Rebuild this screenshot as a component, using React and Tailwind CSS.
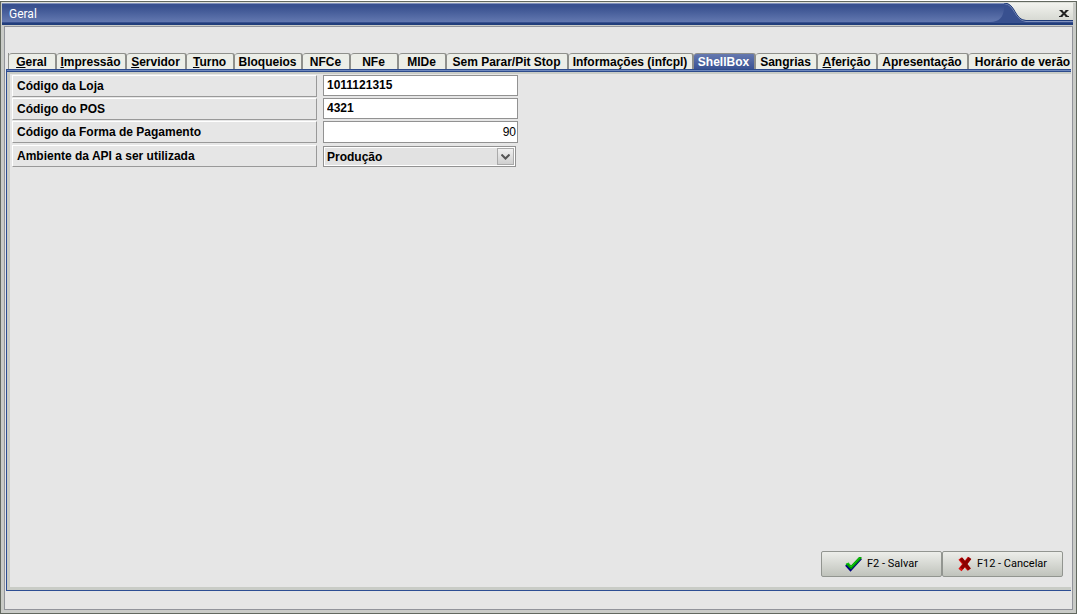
import { useState } from "react";

const TABS = [
  { label: "Geral", hot: true, width: "w-12" },
  { label: "Impressão", hot: true, width: "w-[70px]" },
  { label: "Servidor", hot: true, width: "w-[60px]" },
  { label: "Turno", hot: true, width: "w-12" },
  { label: "Bloqueios", width: "w-[68px]" },
  { label: "NFCe", width: "w-12" },
  { label: "NFe", width: "w-12" },
  { label: "MIDe", width: "w-12" },
  { label: "Sem Parar/Pit Stop", width: "w-[122px]" },
  { label: "Informações (infcpl)", width: "w-[125px]" },
  { label: "ShellBox", width: "w-[62px]" },
  { label: "Sangrias", width: "w-[62px]" },
  { label: "Aferição", hot: true, width: "w-[60px]" },
  { label: "Apresentação", width: "w-[91px]" },
  { label: "Horário de verão", width: "w-[110px]" },
];

function TitleBar() {
  return (
    <header className="mr-[2px] flex h-[22px] shrink-0">
      <div className="flex min-w-0 flex-1 flex-col">
        <div className="h-px shrink-0 bg-[#8191bd]" />
        <div className="h-[3px] shrink-0 bg-[#38508f]" />
        <div className="flex min-h-0 flex-1 items-center bg-linear-to-b from-[#3a5290] to-[#6378b0] pb-px pl-[7px]">
          <h1 className="font-['Roboto',sans-serif] text-xs leading-4 text-white">Geral</h1>
        </div>
        <div className="h-[3px] shrink-0 border-b-2 border-[#213d7b] bg-[#38508f]" />
      </div>
      <div className="relative w-[91px] shrink-0">
        <svg className="block" width="91" height="22" viewBox="0 0 91 22" aria-hidden="true">
          <defs>
            <linearGradient id="cap" x1="0" y1="0" x2="0" y2="1">
              <stop offset="0" stopColor="#f2f3ee" />
              <stop offset="1" stopColor="#cfd2cb" />
            </linearGradient>
            <linearGradient id="pill" x1="0" y1="0" x2="0" y2="1">
              <stop offset="0" stopColor="#3a5290" />
              <stop offset="1" stopColor="#6378b0" />
            </linearGradient>
          </defs>
          <rect width="91" height="22" fill="url(#cap)" />
          <path d="M0 0H22C34 0 32 17 44 17.500H91V22H0Z" fill="#38508f" />
          <path d="M0 .5H22C33 1 32 17 44 18.500H91" fill="none" stroke="#8191bd" />
          <path d="M22 0C34 0 32 17 44 17.500H91" fill="none" stroke="#213d7b" />
          <path d="M0 4H22C22 14 17 19 8 19H0Z" fill="url(#pill)" />
          <path d="M0 21H91" stroke="#213d7b" strokeWidth="2" />
        </svg>
        <button type="button" aria-label="Fechar" className="absolute top-[2px] right-px flex h-4 w-4 items-center justify-center">
          <svg width="10" height="7" viewBox="0 0 10 7" aria-hidden="true">
            <path d="M.5 .5H3.500M6.500 .5H9.500M0 6.500H3.500M6.500 6.500H10" stroke="#222" />
            <path d="M2 .5L8 6.500M8 .5L2 6.500" stroke="#222" strokeWidth="2" />
          </svg>
        </button>
      </div>
    </header>
  );
}

function Tab({ tab, active, onSelect }) {
  return (
    <button
      type="button"
      role="tab"
      aria-selected={active}
      onClick={onSelect}
      className={`h-4 shrink-0 rounded-t-[3px] border-t border-r-2 border-[#8f908c] pr-px text-center text-xs leading-4 font-bold whitespace-nowrap ${tab.width} ${
        active ? "bg-linear-to-b from-[#6679b0] to-[#3a5294] text-white" : "bg-[#eceee8] text-black"
      }`}
    >
      {tab.hot ? <span className="underline underline-offset-1">{tab.label[0]}</span> : tab.label[0]}
      {tab.label.slice(1)}
    </button>
  );
}

const LABEL =
  "flex h-[22px] items-center border border-t-white border-l-white border-r-[#999] border-b-[#999] pl-1 text-xs font-bold";
const FIELD = "w-[195px] border border-[#929292] bg-white px-[3px] pb-px text-xs outline-none";

function Row({ id, label, children }) {
  return (
    <div className="flex gap-[6px]">
      <label htmlFor={id} className={`${LABEL} w-[305px] shrink-0`}>
        {label}
      </label>
      {children}
    </div>
  );
}

function ActionButton({ icon, children }) {
  return (
    <button
      type="button"
      className="flex h-[26px] w-[121px] items-center justify-center gap-[5px] rounded-[2px] border border-[#929590] bg-linear-to-b from-[#edeeea] to-[#c0c3bc] font-['Roboto',sans-serif] text-[11px] whitespace-nowrap"
    >
      {icon}
      {children}
    </button>
  );
}

const CheckIcon = (
  <svg width="17" height="16" viewBox="0 0 17 16" aria-hidden="true">
    <path d="M1 9L5.500 14L16 2.500" fill="none" stroke="#000080" strokeWidth="2.500" />
    <path d="M.5 8L3.500 6.500L6 9.500L14 1H16.500V2.500L6 13.500Z" fill="#009a00" />
    <path d="M1.500 8L3.500 7.500L6 11L15 1.500" fill="none" stroke="#10d510" />
  </svg>
);

const CrossIcon = (
  <svg width="14" height="16" viewBox="0 0 14 16" aria-hidden="true">
    <path d="M2 2.500L11 13.500M11.500 2L2 14" fill="none" stroke="#e01010" strokeWidth="4" />
    <path d="M3 2.500L11.500 13.500M12 2L3.500 12.500" fill="none" stroke="#8c0000" strokeWidth="3.500" />
  </svg>
);

export default function App() {
  const [active, setActive] = useState("ShellBox");
  return (
    <div className="flex h-screen min-h-80 bg-white pt-px pr-[3px] font-['Liberation_Sans',Arial,sans-serif] text-black">
      <main className="flex min-w-0 flex-1 flex-col border border-[#62685f] bg-[#c9cbc7] px-px">
        <div className="h-px shrink-0 bg-[#dcded8]" />
        <TitleBar />
        <div className="mx-[2px] mt-px mb-[3px] flex min-h-0 flex-1 flex-col border border-[#92949b] bg-[#e6e6e6] pt-[26px] pr-px pl-px">
          <div role="tablist" aria-label="Configurações" className="flex shrink-0 overflow-hidden pl-[2px]">
            <div className="flex border-l border-[#8f908c]">
              {TABS.map((tab) => (
                <Tab key={tab.label} tab={tab} active={active === tab.label} onSelect={() => setActive(tab.label)} />
              ))}
            </div>
          </div>
          <form
            role="tabpanel"
            aria-label={active}
            onSubmit={(e) => e.preventDefault()}
            className="mb-[18px] flex min-h-0 flex-1 flex-col border-b border-l border-[#2d4e93]"
          >
            <div className="h-[3px] shrink-0 border-y border-[#2d4b8c] bg-[#6c86bd]" />
            <div className="flex min-h-0 flex-1 flex-col border-t-2 border-b-3 border-l-3 border-[#c9ccc6] pt-px pl-[2px]">
              <div className="flex flex-col gap-px">
                <Row id="loja" label="Código da Loja">
                  <input id="loja" defaultValue="1011121315" className={`${FIELD} h-[21px] font-bold`} />
                </Row>
                <Row id="pos" label="Código do POS">
                  <input id="pos" defaultValue="4321" className={`${FIELD} h-[21px] font-bold`} />
                </Row>
                <Row id="forma" label="Código da Forma de Pagamento">
                  <input id="forma" defaultValue="90" className={`${FIELD} h-[22px] pr-px text-right`} />
                </Row>
                <div className="pt-px">
                  <Row id="ambiente" label="Ambiente da API a ser utilizada">
                    <div className="relative h-[21px] w-[193px] self-end border border-[#929292] bg-white p-px">
                      <select id="ambiente" className="block h-full w-full appearance-none bg-[#e2e2e2] pl-[2px] text-xs font-bold outline-none">
                        <option>Produção</option>
                        <option>Homologação</option>
                      </select>
                      <span className="pointer-events-none absolute top-px right-px flex h-[17px] w-[17px] items-center justify-center border border-[#aaa] bg-linear-to-b from-[#f0f0f0] to-[#cfcfcf]">
                        <svg width="9" height="6" viewBox="0 0 9 6" aria-hidden="true">
                          <path d="M.5 .5L4.500 4.500L8.500 .5" fill="none" stroke="#555" strokeWidth="2" />
                        </svg>
                      </span>
                    </div>
                  </Row>
                </div>
              </div>
              <div className="mt-auto mr-2 mb-[10px] flex justify-end">
                <ActionButton icon={CheckIcon}>F2 - Salvar</ActionButton>
                <ActionButton icon={CrossIcon}>F12 - Cancelar</ActionButton>
              </div>
            </div>
          </form>
        </div>
      </main>
    </div>
  );
}
